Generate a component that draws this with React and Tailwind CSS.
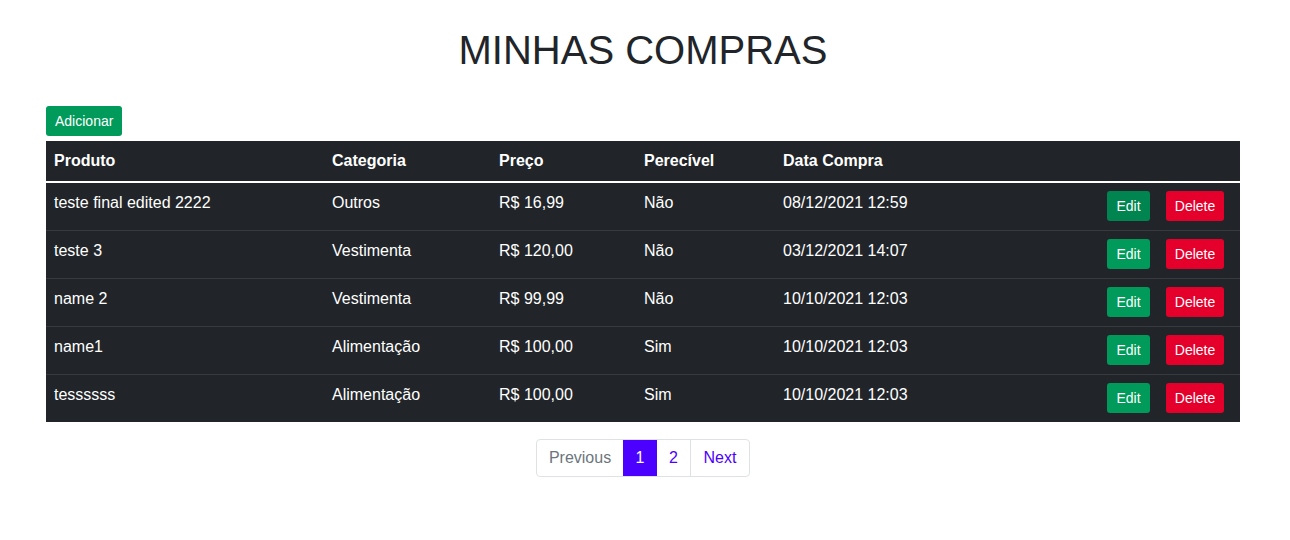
const compras = [
  { produto: "teste final edited 2222", categoria: "Outros", preco: "R$ 16,99", perecivel: "Não", data: "08/12/2021 12:59" },
  { produto: "teste 3", categoria: "Vestimenta", preco: "R$ 120,00", perecivel: "Não", data: "03/12/2021 14:07" },
  { produto: "name 2", categoria: "Vestimenta", preco: "R$ 99,99", perecivel: "Não", data: "10/10/2021 12:03" },
  { produto: "name1", categoria: "Alimentação", preco: "R$ 100,00", perecivel: "Sim", data: "10/10/2021 12:03" },
  { produto: "tessssss", categoria: "Alimentação", preco: "R$ 100,00", perecivel: "Sim", data: "10/10/2021 12:03" },
];

export default function App() {
  return (
    <div className="min-h-[540px] bg-white font-['Liberation_Sans',Arial,sans-serif] text-[#212529]">
      <div className="ml-[46px] mr-[50px] pt-[26px]">
        <h1 className="text-center text-[40px] leading-[48px] font-normal">MINHAS COMPRAS</h1>

        <button className="mt-[32px] h-[30px] px-[9px] rounded-[3px] bg-[#009a5a] text-white text-[14px] leading-[30px]">
          Adicionar
        </button>

        <table className="mt-[5px] w-full text-left text-[16px] bg-[#212529] text-white border-collapse">
          <thead>
            <tr className="h-[41px] border-b-2 border-white">
              <th className="pl-[8px] w-[286px] font-bold">Produto</th>
              <th className="w-[167px] font-bold">Categoria</th>
              <th className="w-[145px] font-bold">Preço</th>
              <th className="w-[139px] font-bold">Perecível</th>
              <th className="font-bold">Data Compra</th>
              <th></th>
            </tr>
          </thead>
          <tbody>
            {compras.map((c, i) => (
              <tr key={i} className={`h-[48px] ${i < compras.length - 1 ? "border-b border-[#373b3e]" : ""}`}>
                <td className="pl-[8px] align-top pt-[8px]">{c.produto}</td>
                <td className="align-top pt-[8px]">{c.categoria}</td>
                <td className="align-top pt-[8px]">{c.preco}</td>
                <td className="align-top pt-[8px]">{c.perecivel}</td>
                <td className="align-top pt-[8px]">{c.data}</td>
                <td className="pr-[16px]">
                  <div className="flex justify-end gap-[16px]">
                    <button className={`h-[30px] w-[43px] rounded-[3px] text-[14px] text-white ${i === 0 ? "bg-[#008550]" : "bg-[#009a5a]"}`}>
                      Edit
                    </button>
                    <button className="h-[30px] w-[58px] rounded-[3px] bg-[#e4002b] text-[14px] text-white">
                      Delete
                    </button>
                  </div>
                </td>
              </tr>
            ))}
          </tbody>
        </table>

        <div className="mt-[17px] flex justify-center">
          <div className="flex h-[38px] text-[16px] border border-[#dee2e6] rounded-[4px] overflow-hidden">
            <span className="w-[86px] flex items-center justify-center text-[#6c757d]">Previous</span>
            <span className="w-[34px] flex items-center justify-center bg-[#4c00ff] text-white">1</span>
            <span className="w-[34px] flex items-center justify-center text-[#4c00ff] border-r border-[#dee2e6]">2</span>
            <span className="w-[58px] flex items-center justify-center text-[#4c00ff]">Next</span>
          </div>
        </div>
      </div>
    </div>
  );
}
